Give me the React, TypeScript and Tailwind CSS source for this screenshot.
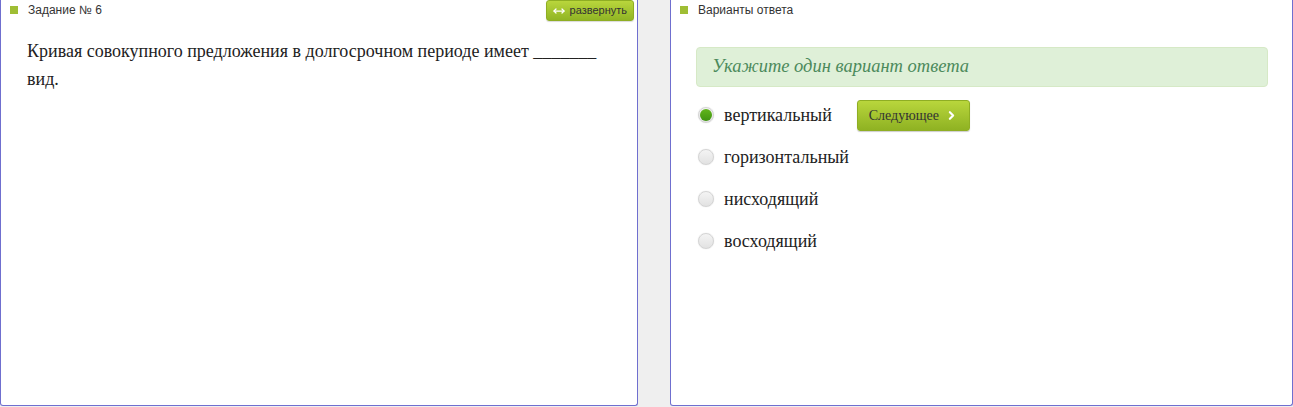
import { ChevronRight, MoveHorizontal } from "lucide-react";

const options = ["вертикальный", "горизонтальный", "нисходящий", "восходящий"];

function Radio({ checked }: { checked: boolean }) {
  return (
    <span className="flex h-[16px] w-[16px] shrink-0 items-center justify-center rounded-full border border-[#d4d4d4] bg-gradient-to-b from-[#f4f4f4] to-[#e2e2e2] shadow-[0_0_1px_rgba(0,0,0,0.2)]">
      {checked && (
        <span className="h-[12px] w-[12px] rounded-full bg-gradient-to-b from-[#62b51c] to-[#3f9410]" />
      )}
    </span>
  );
}

function PanelTitle({ title }: { title: string }) {
  return (
    <div className="flex h-[19px] items-center gap-[10px] pl-[9px] font-['Liberation_Sans',Arial,sans-serif] text-[12px] text-[#333]">
      <span className="h-[8px] w-[8px] bg-[#9fbe34]" />
      <span>{title}</span>
    </div>
  );
}

export default function App() {
  return (
    <div className="flex h-[407px] w-[1293px] gap-[32px] bg-[#efefef]">
      <div className="flex h-[406px] w-[638px] flex-col rounded-b-[3px] border-x border-b border-[#6f6fcf] bg-white">
        <div className="flex items-start justify-between pr-[3px]">
          <PanelTitle title="Задание № 6" />
          <button className="flex h-[21px] items-center gap-[5px] rounded-[3px] border border-[#8fae23] bg-gradient-to-b from-[#b9d63c] to-[#91b524] px-[6px] font-['Liberation_Sans',Arial,sans-serif] text-[11px] text-[#333] shadow-[0_1px_1px_rgba(0,0,0,0.15)]">
            <MoveHorizontal className="h-[12px] w-[12px] text-white" strokeWidth={2.5} />
            развернуть
          </button>
        </div>
        <p className="pl-[26px] pr-[30px] pt-[16px] font-['Liberation_Serif','Times_New_Roman',serif] text-[18px] leading-[28px] text-[#222]">
          Кривая совокупного предложения в долгосрочном периоде имеет _______ вид.
        </p>
      </div>
      <div className="flex h-[406px] w-[623px] flex-col rounded-b-[3px] border-x border-b border-[#6f6fcf] bg-white">
        <PanelTitle title="Варианты ответа" />
        <div className="ml-[25px] mr-[24px] mt-[28px] flex h-[40px] items-center rounded-[4px] border border-[#d6e9c6] bg-[#dff0d8] pl-[15px] font-['Liberation_Serif','Times_New_Roman',serif] text-[18.5px] italic text-[#4c8a5c]">
          Укажите один вариант ответа
        </div>
        <div className="ml-[27px] mt-[7px] flex flex-col">
          {options.map((o, i) => (
            <div key={o} className="flex h-[42px] items-center gap-[10px]">
              <Radio checked={i === 0} />
              <span className="font-['Liberation_Serif','Times_New_Roman',serif] text-[18px] text-[#222]">{o}</span>
              {i === 0 && (
                <button className="ml-[15px] flex h-[31px] w-[113px] items-center justify-center gap-[6px] rounded-[3px] border border-[#8fae23] bg-gradient-to-b from-[#b9d63c] to-[#8fb222] font-['Liberation_Serif','Times_New_Roman',serif] text-[14px] text-[#333] shadow-[0_1px_1px_rgba(0,0,0,0.2)]">
                  Следующее
                  <ChevronRight className="h-[13px] w-[13px] text-white" strokeWidth={4} />
                </button>
              )}
            </div>
          ))}
        </div>
      </div>
    </div>
  );
}
